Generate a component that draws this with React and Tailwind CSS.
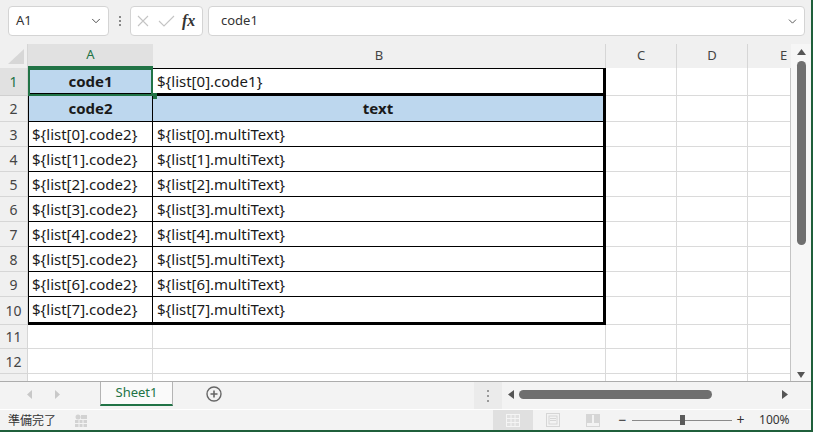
import { ChevronDown } from 'lucide-react';

// table rows of the template sheet (rows 1-10 carry black borders)
const tableRows = [
  {
    n: 1,
    h: 'h-[28px]',
    a: 'code1',
    b: '${list[0].code1}',
    aCls: 'border-t border-l border-r border-b-[3px] border-black bg-[#bdd7ee] font-bold justify-center',
    bCls: 'border-t border-r-[3px] border-b-[3px] border-black justify-start',
    selected: true,
  },
  {
    n: 2,
    h: 'h-[26px]',
    a: 'code2',
    b: 'text',
    aCls: 'border-l border-r border-b border-black bg-[#bdd7ee] font-bold justify-center',
    bCls: 'border-r-[3px] border-b border-black bg-[#bdd7ee] font-bold justify-center',
  },
];

for (let i = 0; i < 8; i++) {
  const last = i === 7;
  tableRows.push({
    n: i + 3,
    h: last ? 'h-[28px]' : 'h-[25px]',
    a: '${list[' + i + '].code2}',
    b: '${list[' + i + '].multiText}',
    aCls: last
      ? 'border-l border-r border-b-[3px] border-black justify-start'
      : 'border-l border-r border-b border-black justify-start',
    bCls: last
      ? 'border-r-[3px] border-b-[3px] border-black justify-start'
      : 'border-r-[3px] border-b border-black justify-start',
  });
}

const emptyRows = [
  { n: 11, h: 'h-[24px]' },
  { n: 12, h: 'h-[25px]' },
  { n: 13, h: 'h-[25px]' },
];

const RowHead = ({ n, active }) => (
  <div
    className={
      active
        ? 'w-[28px] shrink-0 h-full flex items-center justify-center bg-[#e1e1e1] border-r border-b border-[#d0d0d0] text-[14px] text-[#217346]'
        : 'w-[28px] shrink-0 h-full flex items-center justify-center bg-[#f0f0f0] border-r border-b border-[#d6d6d6] text-[14px] text-[#444]'
    }
  >
    {n}
  </div>
);

const EmptyCells = () => (
  <>
    <div className="w-[71px] shrink-0 h-full border-r border-b border-[#dadada]" />
    <div className="w-[71px] shrink-0 h-full border-r border-b border-[#dadada]" />
    <div className="w-[71px] shrink-0 h-full border-r border-b border-[#dadada]" />
  </>
);

const FormulaBar = () => (
  <div className="h-[44px] shrink-0 bg-[#f0f0f0] flex items-start pt-[6px] pl-[8px] pr-[6px]">
    <div className="w-[101px] h-[30px] bg-white border border-[#d4d4d4] rounded-[4px] flex items-center justify-between pl-[7px] pr-[5px] text-[13px] text-[#333]">
      <span>A1</span>
      <ChevronDown size={14} strokeWidth={1.6} className="text-[#444]" />
    </div>
    <div className="w-[21px] h-[30px] flex flex-col items-center justify-center gap-[2px]">
      <span className="w-[2px] h-[2px] bg-[#888]" />
      <span className="w-[2px] h-[2px] bg-[#888]" />
      <span className="w-[2px] h-[2px] bg-[#888]" />
    </div>
    <div className="w-[73px] h-[30px] bg-white border border-[#d4d4d4] rounded-[4px] flex items-center pl-[6px]">
      <svg width="12" height="12" viewBox="0 0 12 12" className="shrink-0">
        <path d="M1 1L11 11M11 1L1 11" stroke="#c4c4c4" strokeWidth="1.1" fill="none" />
      </svg>
      <svg width="17" height="12" viewBox="0 0 17 12" className="shrink-0 ml-[9px]">
        <path d="M1 6L6 11L16 1" stroke="#c4c4c4" strokeWidth="1.1" fill="none" />
      </svg>
      <span className="ml-[7px] font-['Liberation_Serif',serif] italic font-bold text-[16px] text-[#333] leading-none">
        fx
      </span>
    </div>
    <div className="ml-[5px] flex-1 h-[30px] bg-white border border-[#d4d4d4] rounded-[4px] flex items-center justify-between pl-[12px] pr-[5px] text-[13px] text-[#333]">
      <span>code1</span>
      <ChevronDown size={13} strokeWidth={1.6} className="text-[#444]" />
    </div>
  </div>
);

const Sheet = () => (
  <div className="w-[791px] shrink-0 flex flex-col bg-white overflow-hidden">
    {/* column headers */}
    <div className="h-[24px] shrink-0 flex bg-[#f0f0f0] text-[13px] text-[#444]">
      <div className="w-[28px] shrink-0 relative border-r border-[#d6d6d6]">
        <svg width="28" height="24" viewBox="0 0 28 24" className="absolute left-0 top-0">
          <polygon points="8,20 24,5 24,20" fill="#d7d7d7" />
        </svg>
      </div>
      <div className="w-[125px] shrink-0 flex items-center justify-center bg-[#e1e1e1] border-b-2 border-[#217346] text-[#217346]">
        A
      </div>
      <div className="w-[453px] shrink-0 flex items-center justify-center border-r border-[#d6d6d6]">B</div>
      <div className="w-[71px] shrink-0 flex items-center justify-center border-r border-[#d6d6d6]">C</div>
      <div className="w-[71px] shrink-0 flex items-center justify-center border-r border-[#d6d6d6]">D</div>
      <div className="w-[71px] shrink-0 flex items-center justify-center">E</div>
    </div>

    {/* cells */}
    <div className="flex-1 flex flex-col overflow-hidden border-r border-[#c4c4c4] text-[15px] text-[#1a1a1a]">
      {tableRows.map((r) => (
        <div key={r.n} className={'flex shrink-0 ' + r.h}>
          <RowHead n={r.n} active={r.selected} />
          <div className={'w-[125px] shrink-0 h-full flex items-center px-[3px] whitespace-nowrap relative ' + r.aCls}>
            {r.a}
            {r.selected && (
              <div className="absolute -left-px -top-px w-[125px] h-[28px] border-2 border-[#217346]">
                <div className="absolute left-[121px] top-[23px] w-[6px] h-[6px] bg-[#217346]" />
              </div>
            )}
          </div>
          <div className={'w-[453px] shrink-0 h-full flex items-center px-[4px] whitespace-nowrap ' + r.bCls}>
            {r.b}
          </div>
          <EmptyCells />
        </div>
      ))}
      {emptyRows.map((r) => (
        <div key={r.n} className={'flex shrink-0 ' + r.h}>
          <RowHead n={r.n} />
          <div className="w-[125px] shrink-0 h-full border-r border-b border-[#dadada]" />
          <div className="w-[453px] shrink-0 h-full border-r border-b border-[#dadada]" />
          <EmptyCells />
        </div>
      ))}
    </div>
  </div>
);

const VScroll = () => (
  <div className="flex-1 flex flex-col items-center bg-[#f6f6f6] pt-[5px] pb-[3px]">
    <svg width="9" height="6" viewBox="0 0 9 6" className="shrink-0">
      <polygon points="4.5,0 9,6 0,6" fill="#555" />
    </svg>
    <div className="mt-[6px] w-[9px] h-[184px] rounded-full bg-[#6f6f6f]" />
    <div className="flex-1" />
    <svg width="8" height="6" viewBox="0 0 8 6" className="shrink-0">
      <polygon points="0,0 8,0 4,6" fill="#555" />
    </svg>
  </div>
);

const TabBar = () => (
  <div className="h-[28px] shrink-0 flex items-start border-t border-[#acacac] bg-[#f3f3f3]">
    <div className="w-[100px] h-[24px] flex items-center pl-[27px] gap-[23px]">
      <svg width="5" height="9" viewBox="0 0 5 9">
        <polygon points="5,0 5,9 0,4.5" fill="#c8c8c8" />
      </svg>
      <svg width="5" height="9" viewBox="0 0 5 9">
        <polygon points="0,0 0,9 5,4.5" fill="#c8c8c8" />
      </svg>
    </div>
    <div className="w-[73px] h-[24px] bg-[#fafafa] border-l border-r border-[#b4b4b4] border-b-2 border-b-[#217346] flex items-center justify-center text-[13px] text-[#217346]">
      Sheet1
    </div>
    <div className="ml-[33px] h-[24px] flex items-center">
      <svg width="16" height="16" viewBox="0 0 16 16">
        <circle cx="8" cy="8" r="7" stroke="#666" strokeWidth="1.4" fill="none" />
        <path d="M8 4.5V11.5M4.5 8H11.5" stroke="#666" strokeWidth="1.6" />
      </svg>
    </div>
    <div className="w-[252px] shrink-0" />
    <div className="w-[28px] h-full bg-[#ebebeb] flex flex-col items-center justify-center gap-[3px]">
      <span className="w-[2px] h-[2px] bg-[#999]" />
      <span className="w-[2px] h-[2px] bg-[#999]" />
      <span className="w-[2px] h-[2px] bg-[#999]" />
    </div>
    <div className="w-[291px] h-[24px] flex items-center pl-[6px] pr-[5px]">
      <svg width="6" height="9" viewBox="0 0 6 9">
        <polygon points="6,0 6,9 0,4.5" fill="#555" />
      </svg>
      <div className="ml-[5px] w-[193px] h-[9px] rounded-full bg-[#6f6f6f]" />
      <div className="flex-1" />
      <svg width="6" height="9" viewBox="0 0 6 9">
        <polygon points="0,0 0,9 6,4.5" fill="#555" />
      </svg>
    </div>
  </div>
);

const StatusBar = () => (
  <div className="h-[21px] shrink-0 flex items-center border-t border-white bg-[#f3f3f3] text-[#333]">
    <span className="pl-[8px] text-[12px] font-['Noto_Sans_CJK_JP',sans-serif]">準備完了</span>
    <svg width="12" height="13" viewBox="0 0 12 13" className="ml-[19px]">
      <circle cx="3" cy="3" r="2.5" fill="#d2d2d2" />
      <rect x="0" y="6" width="12" height="7" fill="#d2d2d2" />
      <rect x="6" y="1" width="6" height="4" fill="#d2d2d2" />
      <path d="M0 9.5H12M4 6V13M8 6V13" stroke="#f3f3f3" strokeWidth="1" />
    </svg>
    <div className="ml-[406px] flex h-full items-center">
      <div className="w-[40px] h-full bg-[#e0e0e0] flex items-center justify-center">
        <svg width="14" height="13" viewBox="0 0 14 13">
          <rect x="0.5" y="0.5" width="13" height="12" fill="none" stroke="#f5f5f5" />
          <path d="M5 0V13M9 0V13M0 4.5H14M0 8.5H14" stroke="#f5f5f5" />
        </svg>
      </div>
      <div className="w-[40px] h-full flex items-center justify-center">
        <svg width="14" height="14" viewBox="0 0 14 14">
          <rect x="0.5" y="0.5" width="13" height="13" fill="none" stroke="#d6d6d6" />
          <rect x="3" y="3" width="8" height="8" fill="none" stroke="#d6d6d6" />
          <path d="M4 5.5H10M4 7.5H10" stroke="#d6d6d6" />
        </svg>
      </div>
      <div className="w-[40px] h-full flex items-center justify-center">
        <svg width="14" height="13" viewBox="0 0 14 13">
          <rect x="0.5" y="0.5" width="13" height="12" fill="none" stroke="#d6d6d6" />
          <rect x="1" y="1" width="5" height="8" fill="#d6d6d6" />
          <rect x="8" y="1" width="5" height="8" fill="#d6d6d6" />
        </svg>
      </div>
      <span className="w-[19px] text-center text-[14px] leading-none">−</span>
      <div className="w-[100px] h-[10px] relative flex items-center">
        <div className="w-full h-px bg-[#8a8a8a]" />
        <div className="absolute left-[48px] top-0 w-[5px] h-[10px] bg-[#5a5a5a]" />
      </div>
      <span className="w-[17px] text-center text-[14px] leading-none">+</span>
      <span className="ml-[10px] text-[12px]">100%</span>
    </div>
  </div>
);

export default function App() {
  return (
    <div className="w-[813px] h-[432px] overflow-hidden flex flex-col bg-[#f3f3f3] border-r-2 border-b-2 border-[#1f5f3b] font-['Noto_Sans',sans-serif] text-[#222]">
      <FormulaBar />
      <div className="flex h-[337px] shrink-0">
        <Sheet />
        <VScroll />
      </div>
      <TabBar />
      <StatusBar />
    </div>
  );
}
